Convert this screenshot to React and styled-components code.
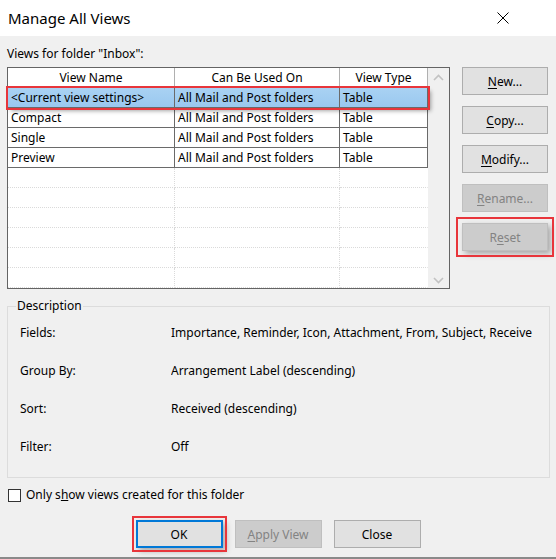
import React from 'react';
import styled, { createGlobalStyle } from 'styled-components';

const Global = createGlobalStyle`
  html, body { margin: 0; padding: 0; background: #f0f0f0; }
  body { font-family: "Noto Sans", "Open Sans", sans-serif; }
  * { box-sizing: border-box; }
`;

const Window = styled.div`
  width: 556px;
  height: 559px;
  background: #f0f0f0;
  display: flex;
  flex-direction: column;
  overflow: hidden;
  font-size: 12px;
  line-height: 16px;
  color: #000;
  border-bottom: 2px solid #8a8a8a;
`;

const TitleBar = styled.div`
  height: 36px;
  flex: none;
  background: #fff;
  display: flex;
  align-items: center;
  justify-content: space-between;
  padding: 0 47px 0 8px;
  font-size: 15px;
`;

const Body = styled.div`
  display: flex;
  flex-direction: column;
  padding: 10px 7px 0 7px;
`;

const Caption = styled.div`
  height: 16px;
`;

const MainRow = styled.div`
  display: flex;
  margin-top: 5px;
`;

const ListBox = styled.div`
  width: 443px;
  height: 222px;
  border: 1px solid #646464;
  background: #fff;
  display: flex;
`;

const Grid = styled.div`
  width: 420px;
  display: flex;
  flex-direction: column;
`;

const Row = styled.div`
  display: grid;
  grid-template-columns: 167px 165px 88px;
  height: 20px;
  background: ${p => (p.$selected ? 'linear-gradient(#a9d2f3, #99c7ef)' : '#fff')};
  position: relative;
  ${p => p.$selected && `
    outline: 2px solid #e8353b;
    outline-offset: 0px;
    box-shadow: 3px 3px 4px rgba(0,0,0,0.35);
    z-index: 1;
  `}
`;

const Cell = styled.div`
  padding: 0 3px;
  display: flex;
  align-items: center;
  justify-content: ${p => (p.$head ? 'center' : 'flex-start')};
  white-space: nowrap;
  overflow: hidden;
  border-right: 1px ${p => (p.$empty ? 'dotted #dadada' : 'solid #6a6a6a')};
  border-bottom: 1px ${p => (p.$empty ? 'dotted #dadada' : 'solid #6a6a6a')};
  ${p => p.$head && 'border-right-color: #b0b0b0; border-bottom-color: #6a6a6a;'}
  ${p => p.$last && 'border-right-color: transparent;'}
`;

const ScrollBar = styled.div`
  width: 21px;
  background: #f0f0f0;
  display: flex;
  flex-direction: column;
  justify-content: space-between;
  align-items: center;
  padding: 6px 0 4px 0;
`;

const SideButtons = styled.div`
  display: flex;
  flex-direction: column;
  gap: 11px;
  margin-left: 12px;
`;

const Button = styled.button`
  font-family: inherit;
  font-size: 12px;
  width: ${p => p.$w || 86}px;
  height: 28px;
  padding: 0;
  background: ${p => (p.disabled ? '#cccccc' : '#e1e1e1')};
  color: ${p => (p.disabled ? '#838383' : '#000')};
  border: 1px solid ${p => (p.disabled ? '#bfbfbf' : '#adadad')};
  ${p => p.$default && 'border: 2px solid #0078d7;'}
  border-radius: 0;
  cursor: default;
  u { text-decoration: underline; text-underline-offset: 2px; }
`;

const Annotated = styled.div`
  outline: 2px solid #e8353b;
  outline-offset: ${p => p.$off || 2}px;
  box-shadow: 3px 3px 6px rgba(0,0,0,0.3);
  display: flex;
`;

const Group = styled.fieldset`
  margin: 9px 0 0 0;
  padding: 0 10px 11px 12px;
  border: 1px solid #dcdcdc;
  width: 543px;
  min-width: 0;
  overflow: hidden;
`;

const Legend = styled.legend`
  margin-left: -4px;
  padding: 0 1px;
  font-size: 12px;
  line-height: 16px;
`;

const DescRow = styled.div`
  display: grid;
  grid-template-columns: 151px 1fr;
  height: 38px;
  align-items: center;
`;

const DescValue = styled.div`
  white-space: nowrap;
  overflow: hidden;
`;

const CheckRow = styled.label`
  display: flex;
  align-items: center;
  gap: 5px;
  margin-top: 9px;
  padding-left: 1px;
  height: 16px;
`;

const CheckBox = styled.span`
  width: 13px;
  height: 13px;
  border: 1px solid #333;
  background: #fff;
  flex: none;
`;

const Footer = styled.div`
  display: flex;
  justify-content: center;
  gap: 12px;
  margin-top: 17px;
`;

const Chevron = ({ up }) => (
  <svg width="11" height="7" viewBox="0 0 11 7">
    <path d={up ? 'M1 6 L5.5 1.5 L10 6' : 'M1 1 L5.5 5.5 L10 1'} fill="none" stroke="#c2c2c2" strokeWidth="1.6" />
  </svg>
);

const rows = [
  ['<Current view settings>', 'All Mail and Post folders', 'Table'],
  ['Compact', 'All Mail and Post folders', 'Table'],
  ['Single', 'All Mail and Post folders', 'Table'],
  ['Preview', 'All Mail and Post folders', 'Table'],
];

const desc = [
  ['Fields:', 'Importance, Reminder, Icon, Attachment, From, Subject, Receive'],
  ['Group By:', 'Arrangement Label (descending)'],
  ['Sort:', 'Received (descending)'],
  ['Filter:', 'Off'],
];

export default function App() {
  return (
    <>
      <Global />
      <Window>
        <TitleBar>
          <span>Manage All Views</span>
          <svg width="12" height="12" viewBox="0 0 12 12">
            <path d="M0.5 0.5 L11.5 11.5 M11.5 0.5 L0.5 11.5" stroke="#000" strokeWidth="1" />
          </svg>
        </TitleBar>
        <Body>
          <Caption>Views for folder "Inbox":</Caption>
          <MainRow>
            <ListBox>
              <Grid>
                <Row>
                  <Cell $head>View Name</Cell>
                  <Cell $head>Can Be Used On</Cell>
                  <Cell $head>View Type</Cell>
                </Row>
                {rows.map((r, i) => (
                  <Row key={i} $selected={i === 0}>
                    {r.map((c, j) => (
                      <Cell key={j}>{c}</Cell>
                    ))}
                  </Row>
                ))}
                {Array.from({ length: 6 }).map((_, i) => (
                  <Row key={'e' + i}>
                    <Cell $empty />
                    <Cell $empty />
                    <Cell $empty $last />
                  </Row>
                ))}
              </Grid>
              <ScrollBar>
                <Chevron up />
                <Chevron />
              </ScrollBar>
            </ListBox>
            <SideButtons>
              <Button><u>N</u>ew...</Button>
              <Button><u>C</u>opy...</Button>
              <Button><u>M</u>odify...</Button>
              <Button disabled><u>R</u>ename...</Button>
              <Annotated $off={4}>
                <Button disabled>R<u>e</u>set</Button>
              </Annotated>
            </SideButtons>
          </MainRow>
          <Group>
            <Legend>Description</Legend>
            {desc.map(([k, v]) => (
              <DescRow key={k}>
                <span>{k}</span>
                <DescValue>{v}</DescValue>
              </DescRow>
            ))}
          </Group>
          <CheckRow>
            <CheckBox />
            <span>Only s<u>h</u>ow views created for this folder</span>
          </CheckRow>
          <Footer>
            <Annotated $off={2}>
              <Button $default $w={87}>OK</Button>
            </Annotated>
            <Button disabled $w={87}><u>A</u>pply View</Button>
            <Button $w={87}>Close</Button>
          </Footer>
        </Body>
      </Window>
    </>
  );
}
